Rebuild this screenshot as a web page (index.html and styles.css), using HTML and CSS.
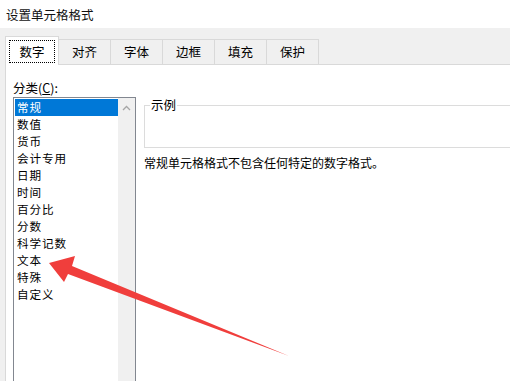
FILE: index.html
```html
<!DOCTYPE html>
<html lang="zh-CN">
<head>
<meta charset="utf-8">
<title>设置单元格格式</title>
<link rel="stylesheet" href="styles.css">
</head>
<body>
<div class="dialog">
  <div class="title">设置单元格格式</div>
  <div class="body">
    <div class="tabs">
      <div class="tab active"><span class="focus">数字</span></div>
      <div class="tab">对齐</div>
      <div class="tab">字体</div>
      <div class="tab">边框</div>
      <div class="tab">填充</div>
      <div class="tab">保护</div>
    </div>
    <div class="page">
      <div class="left">
        <div class="label">分类(<u>C</u>):</div>
        <div class="listbox">
          <ul class="items">
            <li class="sel">常规</li>
            <li>数值</li>
            <li>货币</li>
            <li>会计专用</li>
            <li>日期</li>
            <li>时间</li>
            <li>百分比</li>
            <li>分数</li>
            <li>科学记数</li>
            <li>文本</li>
            <li>特殊</li>
            <li>自定义</li>
          </ul>
          <div class="scroll">
            <svg class="up" width="9" height="6" viewBox="0 0 9 6"><path d="M1 5 L4.5 1.5 L8 5" fill="none" stroke="#a6a6a6" stroke-width="1.3"/></svg>
          </div>
        </div>
      </div>
      <div class="right">
        <fieldset class="sample">
          <legend>示例</legend>
        </fieldset>
        <p class="desc">常规单元格格式不包含任何特定的数字格式。</p>
      </div>
    </div>
  </div>
  <svg class="arrow" width="510" height="381" viewBox="0 0 510 381">
    <polygon points="49,263 75,256 72,266 289,356 68,274 64,282" fill="#f03e3c"/>
  </svg>
</div>
</body>
</html>
```

FILE: styles.css
```css
html, body {
  margin: 0;
  padding: 0;
}
body {
  width: 510px;
  height: 381px;
  overflow: hidden;
  font-family: "Noto Sans CJK SC", "Microsoft YaHei", sans-serif;
  font-size: 12.5px;
  color: #000;
  background: #fff;
}
.dialog {
  position: relative;
  width: 510px;
  height: 381px;
  display: flex;
  flex-direction: column;
}
.title {
  height: 28px;
  line-height: 30px;
  padding-left: 6px;
  background: #fff;
  font-size: 12.5px;
  color: #111;
}
.body {
  flex: 1;
  background: #f0f0f0;
  padding: 8px 0 0 5px;
  display: flex;
  flex-direction: column;
  min-height: 0;
}
.tabs {
  display: flex;
  align-items: flex-end;
  height: 28px;
}
.tab {
  height: 24px;
  line-height: 24px;
  padding: 0 13px;
  border: 1px solid #d9d9d9;
  border-bottom: none;
  border-left: none;
  background: #f0f0f0;
  white-space: nowrap;
}
.tab.active {
  height: 28px;
  line-height: 28px;
  padding: 0 3px;
  background: #fff;
  border-left: 1px solid #d9d9d9;
  position: relative;
  z-index: 1;
  margin-bottom: -1px;
  display: flex;
  align-items: center;
}
.focus {
  display: block;
  width: 44px;
  height: 21px;
  line-height: 21px;
  text-align: center;
  border: 1px dotted #000;
}
.page {
  flex: 1;
  background: #fff;
  border-top: 1px solid #d9d9d9;
  border-left: 1px solid #d9d9d9;
  display: flex;
  padding: 15px 0 0 7px;
  gap: 8px;
  min-height: 0;
}
.left {
  width: 123px;
  display: flex;
  flex-direction: column;
}
.label {
  height: 15px;
  line-height: 15px;
  margin-bottom: 2px;
}
.label u {
  text-decoration: underline;
  text-underline-offset: 1px;
}
.listbox {
  flex: 1;
  border: 1px solid #828790;
  border-bottom: none;
  display: flex;
  padding: 1px 0 0 1px;
}
.items {
  list-style: none;
  margin: 0;
  padding: 0;
  flex: 1;
}
.items li {
  height: 17px;
  line-height: 17px;
  padding-left: 2px;
  font-size: 11.6px;
  letter-spacing: 0.9px;
}
.items li.sel {
  background: #0078d7;
  color: #fff;
}
.scroll {
  width: 17px;
  margin-top: -1px;
  background: #f0f0f0;
  display: flex;
  justify-content: center;
  align-items: flex-start;
}
.up {
  margin-top: 7px;
}
.right {
  flex: 1;
  padding-top: 18px;
}
.sample {
  margin: 0;
  padding: 0;
  height: 48px;
  border: 1px solid #dcdcdc;
  border-right: none;
}
.sample legend {
  margin-left: 5px;
  padding: 0 1px;
  line-height: 14px;
}
.desc {
  margin: 7px 0 0 0;
  line-height: 15px;
  font-size: 12px;
}
.arrow {
  position: absolute;
  left: 0;
  top: 0;
  pointer-events: none;
}
```
